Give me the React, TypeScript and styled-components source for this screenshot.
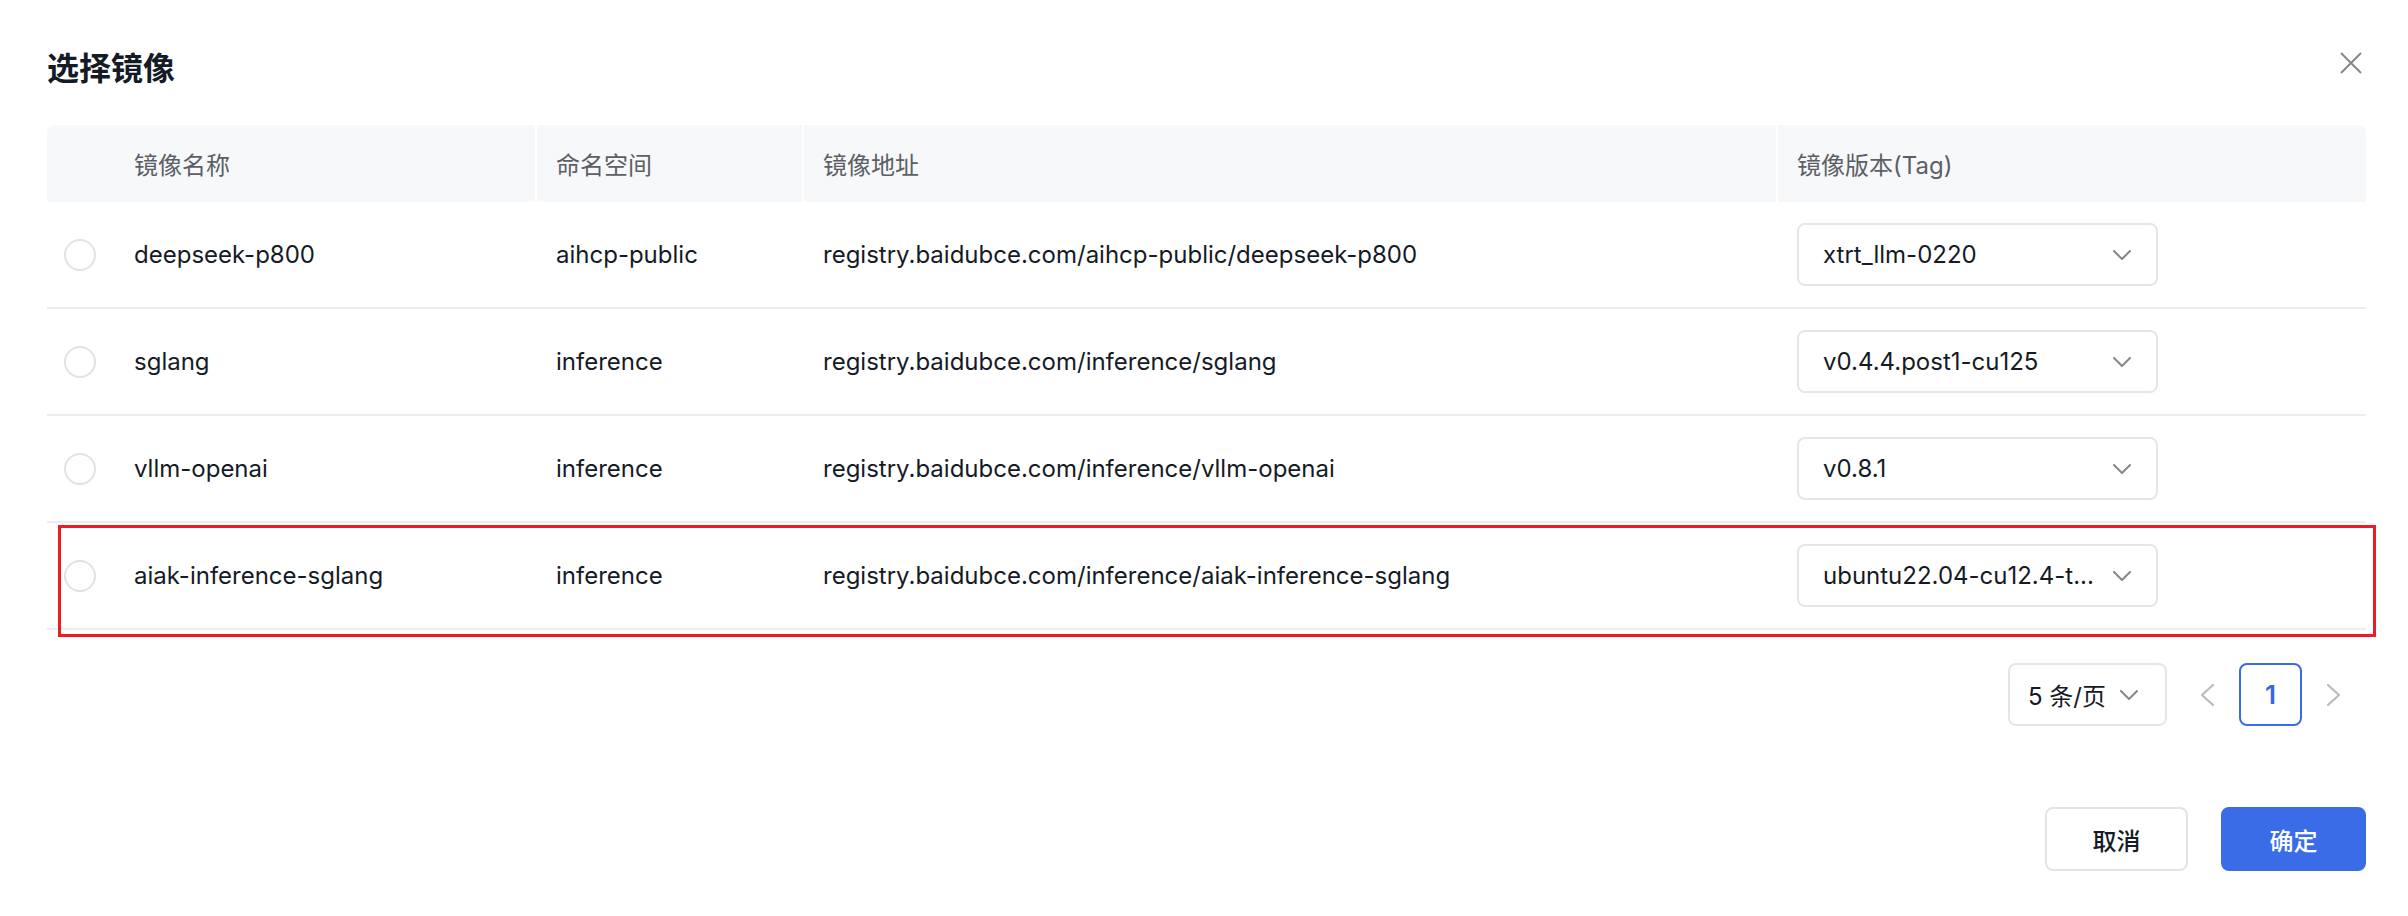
import React from "react";
import styled, { createGlobalStyle } from "styled-components";

const GlobalStyle = createGlobalStyle`
  html, body {
    margin: 0;
    padding: 0;
    background: #ffffff;
  }
  body {
    font-family: Inter, "Noto Sans CJK SC", "Noto Sans", sans-serif;
    -webkit-font-smoothing: antialiased;
  }
  * { box-sizing: border-box; }
`;

const COLUMNS = "66px 422px 267px 974px 1fr";

const Dialog = styled.div`
  width: 2408px;
  height: 916px;
  padding: 45px 42px 0 47px;
  background: #ffffff;
  display: flex;
  flex-direction: column;
  overflow: hidden;
`;

const DialogHeader = styled.div`
  display: flex;
  justify-content: space-between;
  align-items: flex-start;
  height: 48px;
  margin-bottom: 32px;
`;

const Title = styled.h2`
  margin: 0;
  font-size: 32px;
  line-height: 48px;
  font-weight: 600;
  color: #151b26;
`;

const CloseButton = styled.button`
  width: 22px;
  height: 22px;
  margin: 7px 4px 0 0;
  padding: 0;
  border: none;
  background: none;
  display: flex;
  cursor: pointer;
`;

const Table = styled.div`
  display: flex;
  flex-direction: column;
`;

const HeadRow = styled.div`
  display: grid;
  grid-template-columns: ${COLUMNS};
  height: 77px;
  background: #f7f8fa;
  border-radius: 8px 8px 0 0;
`;

const HeadCell = styled.div<{ $sep?: boolean }>`
  display: flex;
  align-items: center;
  padding-left: 21px;
  font-size: 24px;
  color: #5c5f66;
  white-space: nowrap;
  box-shadow: ${(p) => (p.$sep ? "inset 2px 0 0 #ffffff" : "none")};
`;

const BodyRow = styled.div`
  position: relative;
  display: grid;
  grid-template-columns: ${COLUMNS};
  height: 107px;
  border-bottom: 2px solid #ebedf0;
`;

const Cell = styled.div`
  display: flex;
  align-items: center;
  min-width: 0;
  padding: 0 21px;
  font-size: 24px;
  color: #151b26;
  white-space: nowrap;
`;

const RadioCell = styled.div`
  display: flex;
  align-items: center;
  padding-left: 17px;
`;

const Radio = styled.span`
  width: 32px;
  height: 32px;
  border-radius: 50%;
  border: 2px solid #e0e2e6;
  background: #ffffff;
`;

const TagSelect = styled.div`
  width: 361px;
  height: 63px;
  border: 2px solid #e4e6ea;
  border-radius: 8px;
  display: flex;
  align-items: center;
  justify-content: space-between;
  gap: 8px;
  padding: 0 25px 0 24px;
  background: #ffffff;
`;

const SelectValue = styled.span`
  white-space: nowrap;
  font-size: 24px;
  color: #151b26;
`;

const Highlight = styled.div`
  position: absolute;
  top: 2px;
  left: 11px;
  right: -10px;
  bottom: -9px;
  border: 3px solid #ec1c24;
  pointer-events: none;
`;

const Pagination = styled.div`
  display: flex;
  justify-content: flex-end;
  align-items: center;
  margin-top: 33px;
  height: 63px;
`;

const PageSize = styled.div`
  width: 159px;
  height: 63px;
  margin-right: 8px;
  border: 2px solid #e4e6ea;
  border-radius: 8px;
  display: flex;
  align-items: center;
  justify-content: space-between;
  padding: 0 27px 0 18px;
  font-size: 24px;
  color: #151b26;
  white-space: nowrap;
`;

const PagerArrow = styled.button`
  width: 64px;
  height: 63px;
  padding: 0;
  border: none;
  background: none;
  display: flex;
  align-items: center;
  justify-content: center;
`;

const PageItem = styled.button`
  width: 63px;
  height: 63px;
  padding: 0;
  border: 2px solid #3b6ce8;
  border-radius: 8px;
  background: #ffffff;
  color: #3866e6;
  font-family: Inter, "Noto Sans CJK SC", sans-serif;
  font-size: 26px;
  font-weight: 600;
`;

const Footer = styled.div`
  display: flex;
  justify-content: flex-end;
  gap: 33px;
  margin-top: 81px;
`;

const Button = styled.button<{ $primary?: boolean }>`
  width: ${(p) => (p.$primary ? "145px" : "143px")};
  height: 64px;
  border-radius: 8px;
  border: 2px solid ${(p) => (p.$primary ? "#3b6ce8" : "#e2e4e8")};
  background: ${(p) => (p.$primary ? "#3b6ce8" : "#ffffff")};
  color: ${(p) => (p.$primary ? "#ffffff" : "#151b26")};
  font-family: "Noto Sans CJK SC", sans-serif;
  font-size: 24px;
  font-weight: 500;
  cursor: pointer;
`;

const ChevronDown = () => (
  <svg width="18" height="10" viewBox="0 0 18 10" fill="none">
    <path d="M1 1 L9 9 L17 1" stroke="#84878d" strokeWidth="2" strokeLinecap="round" strokeLinejoin="round" />
  </svg>
);

const ChevronSide = ({ dir }: { dir: "left" | "right" }) => (
  <svg width="14" height="22" viewBox="0 0 14 22" fill="none">
    <path
      d={dir === "left" ? "M13 1 L2 11 L13 21" : "M1 1 L12 11 L1 21"}
      stroke="#b8bbc1"
      strokeWidth="2.2"
      strokeLinecap="round"
      strokeLinejoin="round"
    />
  </svg>
);

type Image = { name: string; ns: string; addr: string; tag: string; marked?: boolean };

const images: Image[] = [
  { name: "deepseek-p800", ns: "aihcp-public", addr: "registry.baidubce.com/aihcp-public/deepseek-p800", tag: "xtrt_llm-0220" },
  { name: "sglang", ns: "inference", addr: "registry.baidubce.com/inference/sglang", tag: "v0.4.4.post1-cu125" },
  { name: "vllm-openai", ns: "inference", addr: "registry.baidubce.com/inference/vllm-openai", tag: "v0.8.1" },
  {
    name: "aiak-inference-sglang",
    ns: "inference",
    addr: "registry.baidubce.com/inference/aiak-inference-sglang",
    tag: "ubuntu22.04-cu12.4-t...",
    marked: true,
  },
];

export default function App() {
  return (
    <>
      <GlobalStyle />
      <Dialog>
        <DialogHeader>
          <Title>选择镜像</Title>
          <CloseButton aria-label="关闭">
            <svg width="22" height="22" viewBox="0 0 22 22" fill="none">
              <path d="M1 1 L21 21 M21 1 L1 21" stroke="#84868c" strokeWidth="2" />
            </svg>
          </CloseButton>
        </DialogHeader>

        <Table>
          <HeadRow>
            <HeadCell />
            <HeadCell>镜像名称</HeadCell>
            <HeadCell $sep>命名空间</HeadCell>
            <HeadCell $sep>镜像地址</HeadCell>
            <HeadCell $sep>镜像版本(Tag)</HeadCell>
          </HeadRow>
          {images.map((img) => (
            <BodyRow key={img.name}>
              <RadioCell>
                <Radio />
              </RadioCell>
              <Cell>{img.name}</Cell>
              <Cell>{img.ns}</Cell>
              <Cell>{img.addr}</Cell>
              <Cell>
                <TagSelect>
                  <SelectValue>{img.tag}</SelectValue>
                  <ChevronDown />
                </TagSelect>
              </Cell>
              {img.marked && <Highlight />}
            </BodyRow>
          ))}
        </Table>

        <Pagination>
          <PageSize>
            <span>5 条/页</span>
            <ChevronDown />
          </PageSize>
          <PagerArrow aria-label="上一页">
            <ChevronSide dir="left" />
          </PagerArrow>
          <PageItem>1</PageItem>
          <PagerArrow aria-label="下一页">
            <ChevronSide dir="right" />
          </PagerArrow>
        </Pagination>

        <Footer>
          <Button>取消</Button>
          <Button $primary>确定</Button>
        </Footer>
      </Dialog>
    </>
  );
}
